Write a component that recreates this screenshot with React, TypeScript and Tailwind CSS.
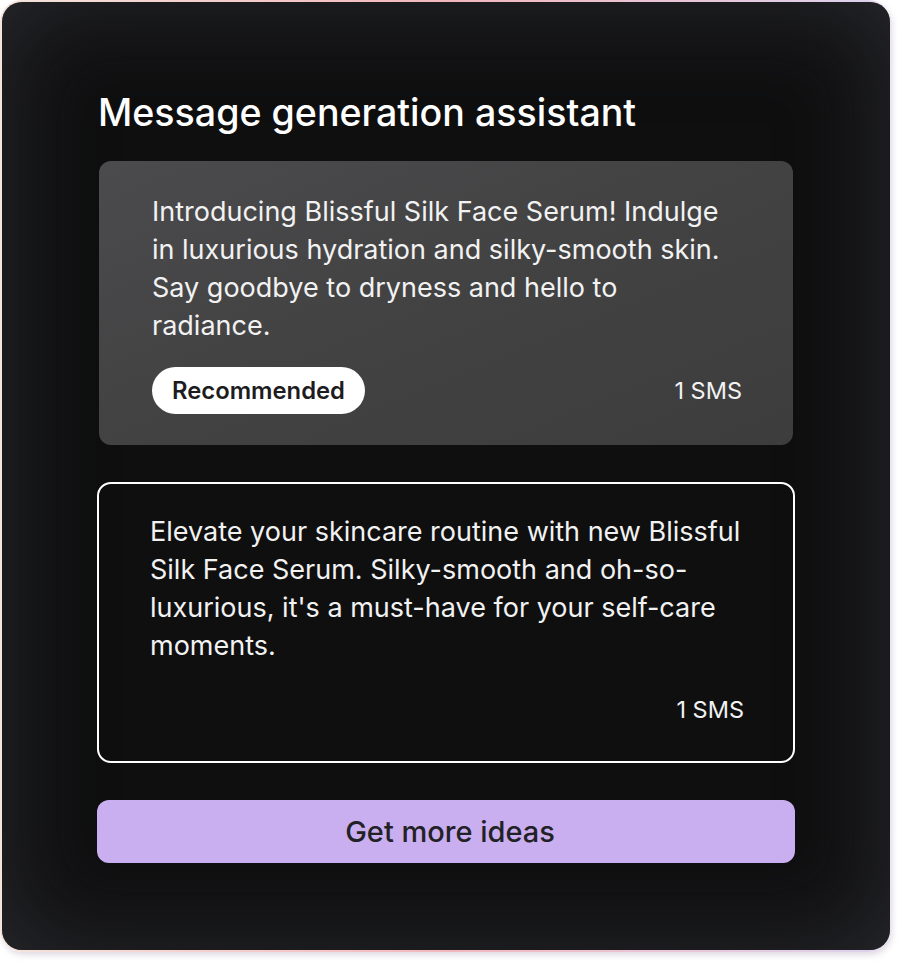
import React from 'react';

const font = { fontFamily: 'Inter, "Noto Sans", sans-serif' };

function Message({ text, featured }: { text: string; featured?: boolean }) {
  return (
    <div
      className={
        featured
          ? 'rounded-xl bg-gradient-to-br from-[#4b4b4d] via-[#424243] to-[#3d3d3d] pl-[53px] pr-[51px] pt-[32px] pb-[31px]'
          : 'rounded-[14px] border-2 border-white pl-[51px] pr-[49px] pt-[29px] pb-[36px]'
      }
    >
      <p className={`text-[27px] leading-[38px] text-[#f2f2f2] ${featured ? '' : 'mr-[-11px]'}`}>{text}</p>
      <div className={`flex items-center ${featured ? 'justify-between mt-[22px]' : 'justify-end mt-[30px]'}`}>
        {featured && (
          <span className="rounded-full bg-white px-[20px] h-[47px] flex items-center text-[23.8px] font-semibold text-[#1d1d1f]">
            Recommended
          </span>
        )}
        <span className="text-[23.5px] leading-[30px] text-[#f2f2f2]">1 SMS</span>
      </div>
    </div>
  );
}

export default function App() {
  return (
    <div className="min-h-screen bg-white" style={font}>
      <div className="w-[890px] h-[952px] rounded-[22px] bg-gradient-to-r from-[#f4e4dc] via-[#f3b7bd] to-[#ddd2ee] pt-[2px] pl-[2px] shadow-[2px_3px_6px_rgba(160,150,170,0.35)]">
        <div className="w-[888px] h-[948px] rounded-[20px] bg-[#0f0f10] shadow-[inset_0_0_100px_rgba(60,62,68,0.6)] px-[95px] pt-[88px]">
          <h1 className="text-[37.6px] leading-[46px] font-medium text-white ml-[1px]">
            Message generation assistant
          </h1>
          <div className="mt-[25px] flex flex-col gap-[37px]">
            <div className="mx-[2px]">
              <Message
                featured
                text="Introducing Blissful Silk Face Serum! Indulge in luxurious hydration and silky-smooth skin. Say goodbye to dryness and hello to radiance."
              />
            </div>
            <Message text="Elevate your skincare routine with new Blissful Silk Face Serum. Silky-smooth and oh-so-luxurious, it's a must-have for your self-care moments." />
            <button className="h-[63px] rounded-xl bg-[#c9aef0] pl-[8px] text-[29px] font-medium text-[#222226]">
              Get more ideas
            </button>
          </div>
        </div>
      </div>
    </div>
  );
}
